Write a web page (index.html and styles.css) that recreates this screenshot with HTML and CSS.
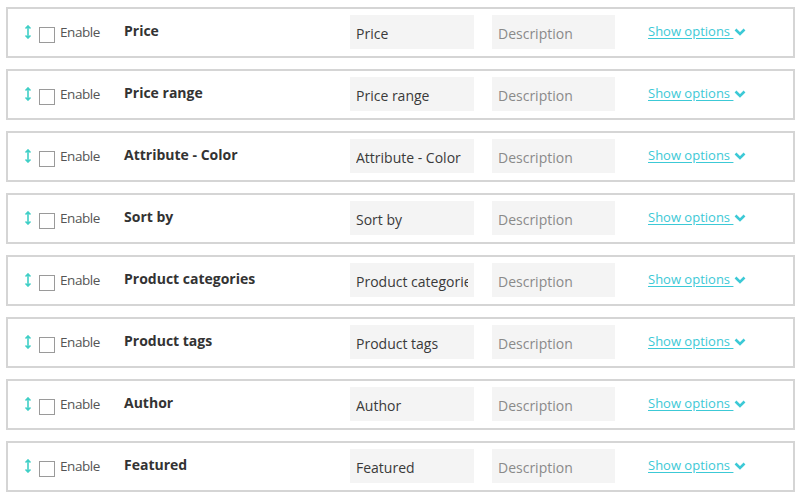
FILE: index.html
```html
<!DOCTYPE html>
<html>
<head>
<meta charset="utf-8">
<link rel="stylesheet" href="styles.css">
</head>
<body>
<div class="list">
  <div class="row">
    <div class="handle-col"><svg class="drag" viewBox="0 0 8 14"><path d="M4 1V13M1.5 3.5L4 1L6.5 3.5M1.5 10.5L4 13L6.5 10.5"/></svg><span class="check"></span><span class="enable">Enable</span></div>
    <div class="name">Price</div>
    <input class="field" value="Price">
    <input class="field desc" placeholder="Description">
    <a class="opts" href="#">Show options&nbsp;</a><svg class="chev" viewBox="0 0 12 8"><path d="M1.5 1.5L6 6L10.5 1.5"/></svg>
  </div>
  <div class="row">
    <div class="handle-col"><svg class="drag" viewBox="0 0 8 14"><path d="M4 1V13M1.5 3.5L4 1L6.5 3.5M1.5 10.5L4 13L6.5 10.5"/></svg><span class="check"></span><span class="enable">Enable</span></div>
    <div class="name">Price range</div>
    <input class="field" value="Price range">
    <input class="field desc" placeholder="Description">
    <a class="opts" href="#">Show options&nbsp;</a><svg class="chev" viewBox="0 0 12 8"><path d="M1.5 1.5L6 6L10.5 1.5"/></svg>
  </div>
  <div class="row">
    <div class="handle-col"><svg class="drag" viewBox="0 0 8 14"><path d="M4 1V13M1.5 3.5L4 1L6.5 3.5M1.5 10.5L4 13L6.5 10.5"/></svg><span class="check"></span><span class="enable">Enable</span></div>
    <div class="name">Attribute - Color</div>
    <input class="field" value="Attribute - Color">
    <input class="field desc" placeholder="Description">
    <a class="opts" href="#">Show options&nbsp;</a><svg class="chev" viewBox="0 0 12 8"><path d="M1.5 1.5L6 6L10.5 1.5"/></svg>
  </div>
  <div class="row">
    <div class="handle-col"><svg class="drag" viewBox="0 0 8 14"><path d="M4 1V13M1.5 3.5L4 1L6.5 3.5M1.5 10.5L4 13L6.5 10.5"/></svg><span class="check"></span><span class="enable">Enable</span></div>
    <div class="name">Sort by</div>
    <input class="field" value="Sort by">
    <input class="field desc" placeholder="Description">
    <a class="opts" href="#">Show options&nbsp;</a><svg class="chev" viewBox="0 0 12 8"><path d="M1.5 1.5L6 6L10.5 1.5"/></svg>
  </div>
  <div class="row">
    <div class="handle-col"><svg class="drag" viewBox="0 0 8 14"><path d="M4 1V13M1.5 3.5L4 1L6.5 3.5M1.5 10.5L4 13L6.5 10.5"/></svg><span class="check"></span><span class="enable">Enable</span></div>
    <div class="name">Product categories</div>
    <input class="field" value="Product categories">
    <input class="field desc" placeholder="Description">
    <a class="opts" href="#">Show options&nbsp;</a><svg class="chev" viewBox="0 0 12 8"><path d="M1.5 1.5L6 6L10.5 1.5"/></svg>
  </div>
  <div class="row">
    <div class="handle-col"><svg class="drag" viewBox="0 0 8 14"><path d="M4 1V13M1.5 3.5L4 1L6.5 3.5M1.5 10.5L4 13L6.5 10.5"/></svg><span class="check"></span><span class="enable">Enable</span></div>
    <div class="name">Product tags</div>
    <input class="field" value="Product tags">
    <input class="field desc" placeholder="Description">
    <a class="opts" href="#">Show options&nbsp;</a><svg class="chev" viewBox="0 0 12 8"><path d="M1.5 1.5L6 6L10.5 1.5"/></svg>
  </div>
  <div class="row">
    <div class="handle-col"><svg class="drag" viewBox="0 0 8 14"><path d="M4 1V13M1.5 3.5L4 1L6.5 3.5M1.5 10.5L4 13L6.5 10.5"/></svg><span class="check"></span><span class="enable">Enable</span></div>
    <div class="name">Author</div>
    <input class="field" value="Author">
    <input class="field desc" placeholder="Description">
    <a class="opts" href="#">Show options&nbsp;</a><svg class="chev" viewBox="0 0 12 8"><path d="M1.5 1.5L6 6L10.5 1.5"/></svg>
  </div>
  <div class="row">
    <div class="handle-col"><svg class="drag" viewBox="0 0 8 14"><path d="M4 1V13M1.5 3.5L4 1L6.5 3.5M1.5 10.5L4 13L6.5 10.5"/></svg><span class="check"></span><span class="enable">Enable</span></div>
    <div class="name">Featured</div>
    <input class="field" value="Featured">
    <input class="field desc" placeholder="Description">
    <a class="opts" href="#">Show options&nbsp;</a><svg class="chev" viewBox="0 0 12 8"><path d="M1.5 1.5L6 6L10.5 1.5"/></svg>
  </div>
</div>
</body>
</html>
```
FILE: styles.css
```css
html, body {
  margin: 0;
  padding: 0;
  background: #fff;
}
body {
  font-family: "Open Sans", "Noto Sans", sans-serif;
  font-size: 13px;
  color: #444;
}
.list {
  padding: 7px 5px 0 6px;
  display: flex;
  flex-direction: column;
  gap: 11px;
}
.row {
  height: 47px;
  border: 2px solid #d5d5d5;
  display: grid;
  grid-template-columns: 100px 226px 142px 156px auto 1fr;
  align-items: center;
  padding-left: 16px;
}
.handle-col {
  display: flex;
  align-items: center;
}
.drag {
  width: 8px;
  height: 14px;
  fill: none;
  stroke: #3fcfc6;
  stroke-width: 1.6;
  margin-top: -2px;
}
.check {
  width: 14px;
  height: 14px;
  border: 1px solid #9a9a9a;
  background: #fff;
  margin-left: 7px;
  margin-top: 4px;
  flex: none;
}
.enable {
  margin-left: 5px;
  color: #555;
  margin-top: -2px;
  font-size: 13.5px;
  letter-spacing: -0.45px;
}
.name {
  font-weight: 700;
  font-size: 14px;
  color: #333;
  margin-top: -4px;
}
.field {
  width: 124px;
  height: 34px;
  box-sizing: border-box;
  border: none;
  background: #f4f4f4;
  font-family: inherit;
  font-size: 14px;
  color: #3a3a3a;
  padding: 3px 6px 0;
  margin-top: -2px;
  outline: none;
}
.field.desc {
  width: 123px;
}
.field::placeholder {
  color: #8a8a8a;
}
.opts {
  color: #3cc9d6;
  text-decoration: underline;
  text-underline-offset: 2px;
  margin-top: -3px;
  white-space: nowrap;
}
.chev {
  width: 12px;
  height: 8px;
  fill: none;
  stroke: #3cc9d6;
  stroke-width: 2.6;
  margin-left: 1px;
  margin-top: -1px;
}
```
